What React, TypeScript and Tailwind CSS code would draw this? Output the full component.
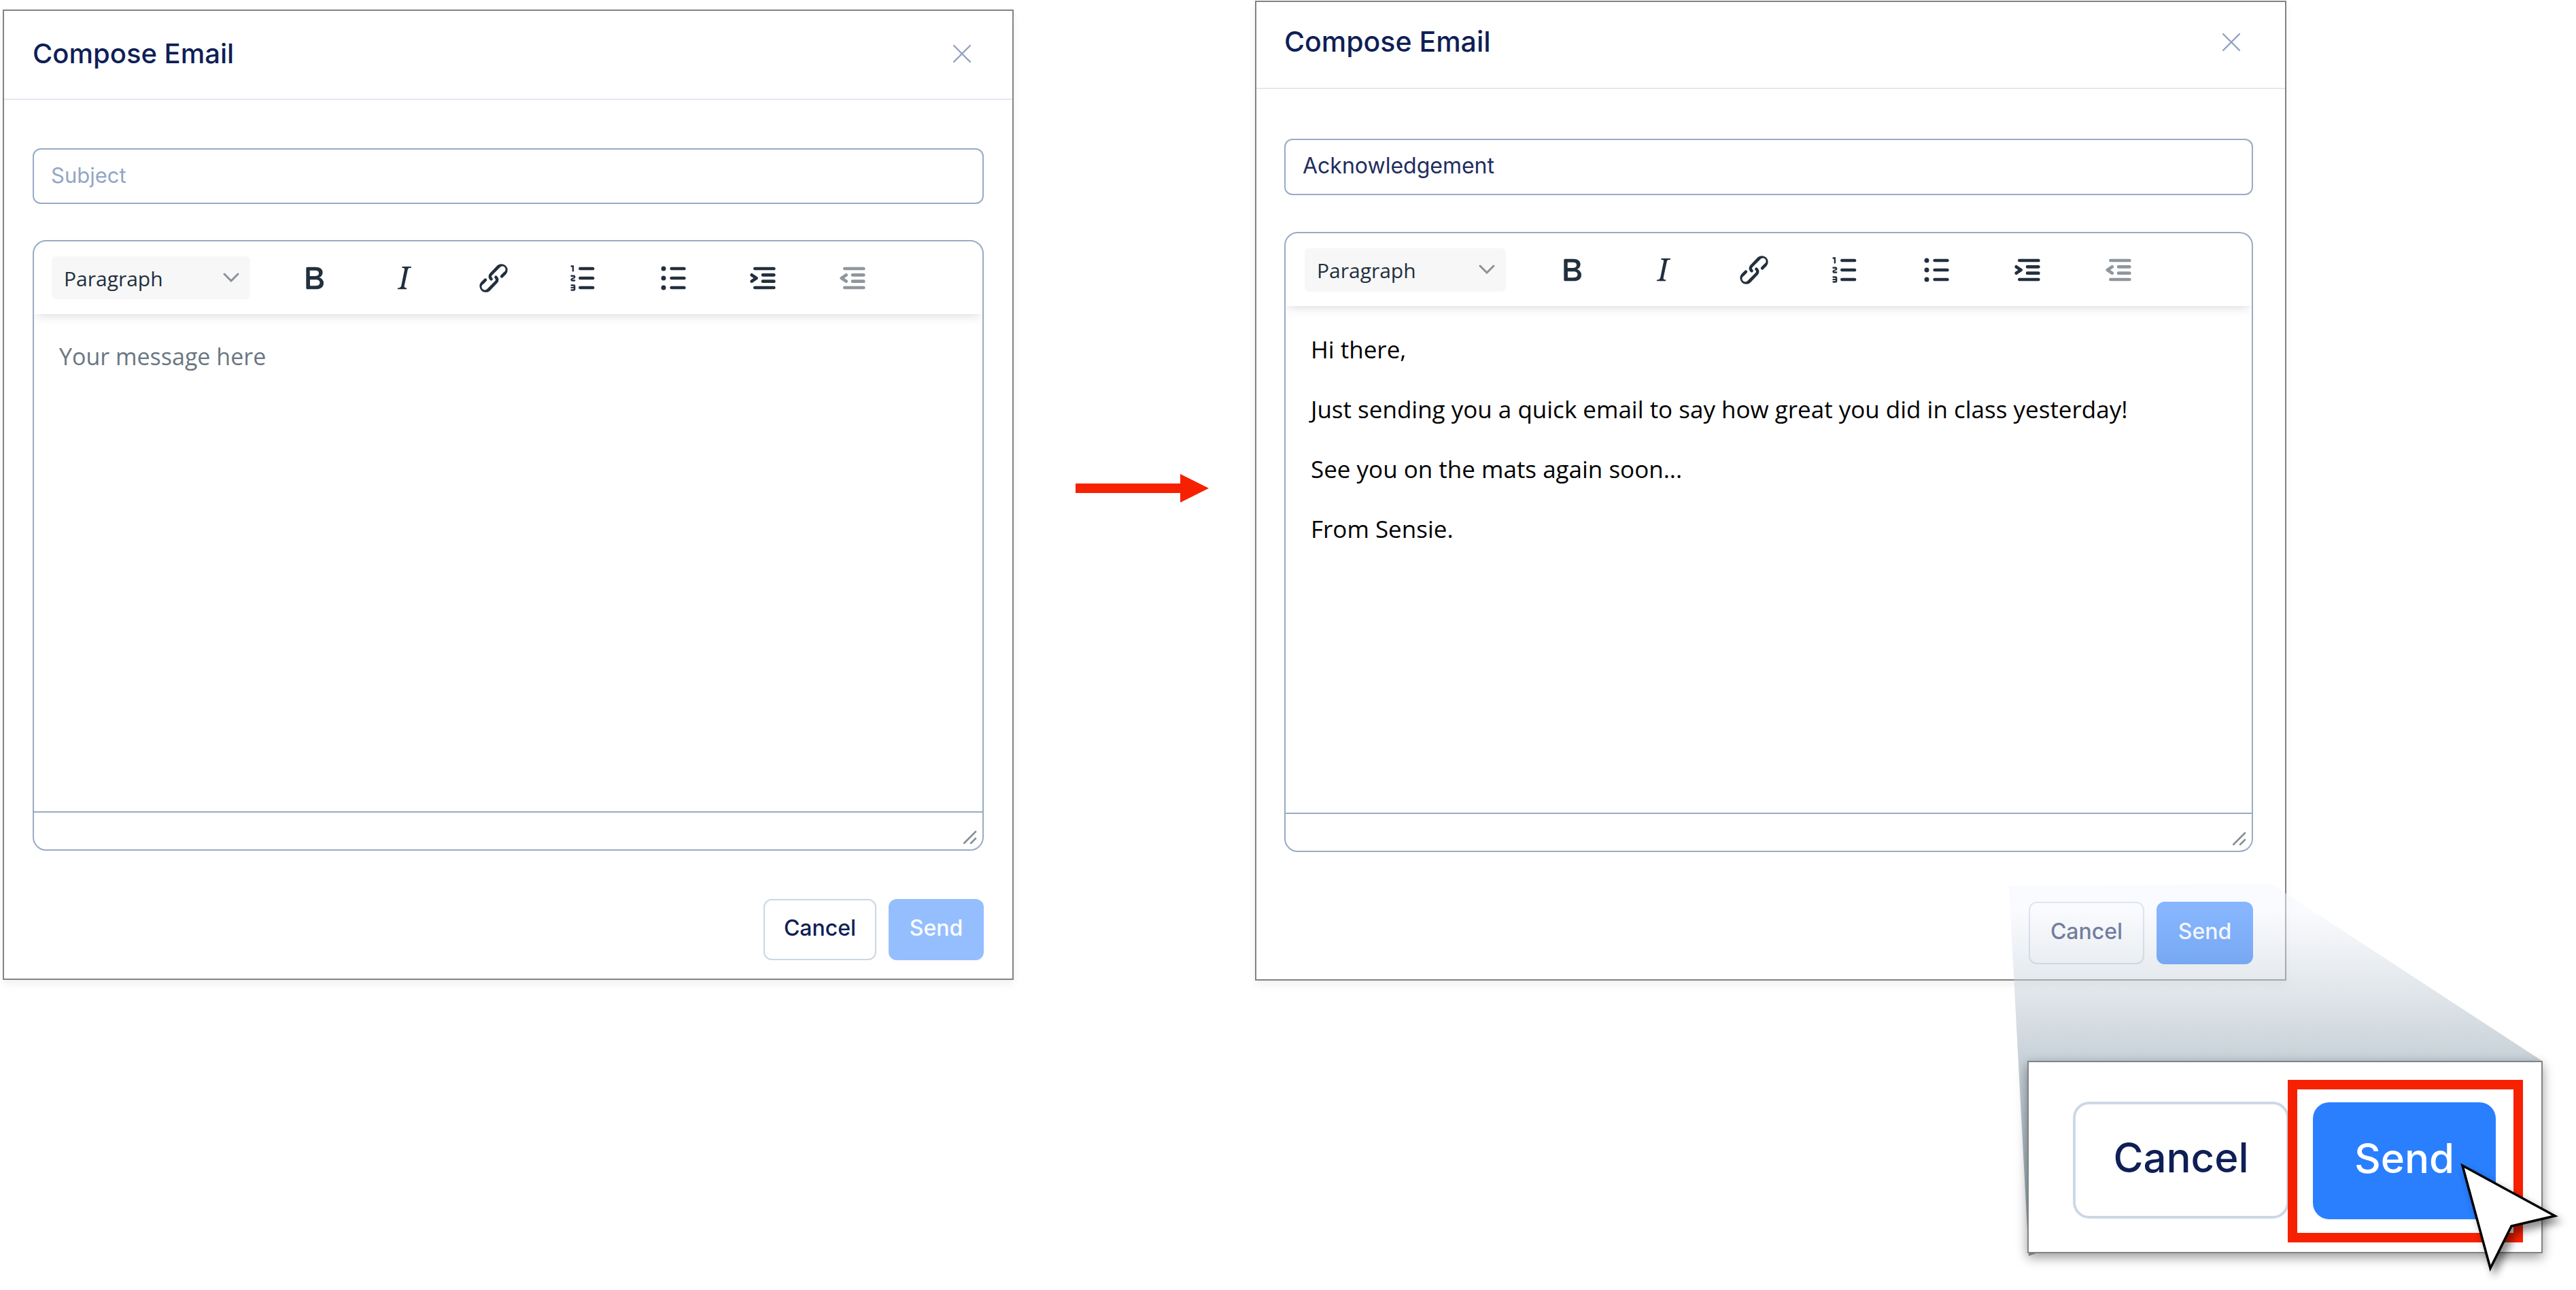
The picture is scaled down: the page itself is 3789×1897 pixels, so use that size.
import React, { useId, useState } from 'react';

const TOOLBAR_ICONS = {
    bold: 'M7.8 19c-.3 0-.5 0-.6-.2l-.2-.5V5.7c0-.2 0-.4.2-.5l.6-.2h5c1.5 0 2.7.3 3.5 1 .7.6 1.1 1.4 1.1 2.5a3 3 0 0 1-.6 1.9c-.4.6-1 1-1.6 1.2.4.1.9.3 1.3.6s.8.7 1 1.2c.4.4.5 1 .5 1.6 0 1.3-.4 2.3-1.3 3-.8.7-2.1 1-3.8 1H7.8Zm5-8.3c.6 0 1.2-.1 1.6-.5.4-.3.6-.7.6-1.3 0-1.1-.8-1.7-2.3-1.7H9.3v3.5h3.4Zm.5 6c.7 0 1.3-.1 1.7-.4.4-.4.6-.9.6-1.5s-.2-1-.7-1.4c-.4-.3-1-.4-2-.4H9.4v3.8h4Z',
    italic: 'm16.7 4.7-.1.9h-.3c-.6 0-1 0-1.4.3-.3.3-.4.6-.5 1.1l-2.1 9.8v.6c0 .5.4.8 1.4.8h.2l-.2.8H8l.2-.8h.2c1.1 0 1.8-.5 2-1.5l2-9.8.1-.5c0-.6-.4-.8-1.4-.8h-.3l.2-.9h5.8Z',
    link: 'M6.2 12.3a1 1 0 0 1 1.4 1.4l-2 2a2 2 0 1 0 2.6 2.8l4.8-4.8a1 1 0 0 0 0-1.4 1 1 0 1 1 1.4-1.3 2.9 2.9 0 0 1 0 4L9.6 20a3.9 3.9 0 0 1-5.5-5.5l2-2Zm11.6-.6a1 1 0 0 1-1.4-1.4l2-2a2 2 0 1 0-2.6-2.8L11 10.3a1 1 0 0 0 0 1.4A1 1 0 1 1 9.6 13a2.9 2.9 0 0 1 0-4L14.4 4a3.9 3.9 0 0 1 5.5 5.5l-2 2Z',
    numbered: 'M10 17h8c.6 0 1 .4 1 1s-.4 1-1 1h-8a1 1 0 0 1 0-2Zm0-6h8c.6 0 1 .4 1 1s-.4 1-1 1h-8a1 1 0 0 1 0-2Zm0-6h8c.6 0 1 .4 1 1s-.4 1-1 1h-8a1 1 0 1 1 0-2ZM6 4v3.5c0 .3-.2.5-.5.5a.5.5 0 0 1-.5-.5V5h-.5a.5.5 0 0 1 0-1H6Zm-1 8.8.2.2h1.3c.3 0 .5.2.5.5s-.2.5-.5.5H4.9a1 1 0 0 1-.9-1V13c0-.4.3-.8.6-1l1.2-.4.2-.3a.2.2 0 0 0-.2-.2H4.5a.5.5 0 0 1-.5-.5c0-.3.2-.5.5-.5h1.6c.5 0 .9.4.9 1v.1c0 .4-.3.8-.6 1l-1.2.4-.2.3ZM7 17v2c0 .6-.4 1-1 1H4.5a.5.5 0 0 1 0-1h1.2c.2 0 .3-.1.3-.3 0-.2-.1-.3-.3-.3H4.4a.4.4 0 1 1 0-.8h1.3c.2 0 .3-.1.3-.3 0-.2-.1-.3-.3-.3H4.5a.5.5 0 1 1 0-1H6c.6 0 1 .4 1 1Z',
    bullets: 'M11 5h8c.6 0 1 .4 1 1s-.4 1-1 1h-8a1 1 0 0 1 0-2Zm0 6h8c.6 0 1 .4 1 1s-.4 1-1 1h-8a1 1 0 0 1 0-2Zm0 6h8c.6 0 1 .4 1 1s-.4 1-1 1h-8a1 1 0 0 1 0-2ZM4.5 6a1.5 1.5 0 1 1 3 0 1.5 1.5 0 0 1-3 0Zm0 6a1.5 1.5 0 1 1 3 0 1.5 1.5 0 0 1-3 0Zm0 6a1.5 1.5 0 1 1 3 0 1.5 1.5 0 0 1-3 0Z',
    indent: 'M7 5h12c.6 0 1 .4 1 1s-.4 1-1 1H7a1 1 0 1 1 0-2Zm5 4h7c.6 0 1 .4 1 1s-.4 1-1 1h-7a1 1 0 0 1 0-2Zm0 4h7c.6 0 1 .4 1 1s-.4 1-1 1h-7a1 1 0 0 1 0-2Zm-5 4h12a1 1 0 0 1 0 2H7a1 1 0 0 1 0-2Zm-2.6-3.8L6.2 12l-1.8-1.2a1 1 0 0 1 1.2-1.6l3 2a1 1 0 0 1 0 1.6l-3 2a1 1 0 1 1-1.2-1.6Z',
    outdent: 'M7 5h12c.6 0 1 .4 1 1s-.4 1-1 1H7a1 1 0 1 1 0-2Zm5 4h7c.6 0 1 .4 1 1s-.4 1-1 1h-7a1 1 0 0 1 0-2Zm0 4h7c.6 0 1 .4 1 1s-.4 1-1 1h-7a1 1 0 0 1 0-2Zm-5 4h12a1 1 0 0 1 0 2H7a1 1 0 0 1 0-2Zm1.6-3.8a1 1 0 0 1-1.2 1.6l-3-2a1 1 0 0 1 0-1.6l3-2a1 1 0 0 1 1.2 1.6L6.8 12l1.8 1.2Z',
};

const TOOLBAR_BUTTONS = [
    { label: 'Bold', path: TOOLBAR_ICONS.bold },
    { label: 'Italic', path: TOOLBAR_ICONS.italic },
    { label: 'Insert link', path: TOOLBAR_ICONS.link },
    { label: 'Numbered list', path: TOOLBAR_ICONS.numbered },
    { label: 'Bullet list', path: TOOLBAR_ICONS.bullets },
    { label: 'Increase indent', path: TOOLBAR_ICONS.indent },
    { label: 'Decrease indent', path: TOOLBAR_ICONS.outdent, disabled: true },
];

const SAMPLE_MESSAGE = [
    'Hi there,',
    'Just sending you a quick email to say how great you did in class yesterday!',
    'See you on the mats again soon...',
    'From Sensie.',
].join('\n\n');

// The empty dialog is shown slightly smaller than the filled one
const SIZES = {
    empty: {
        header: 'h-[131px] pl-[42px] pr-[42px] pb-1',
        title: 'text-[40px]',
        body: 'px-[42px] pt-[71px]',
        subject: 'h-[82px] text-[31px]',
        editor: 'mt-[53px]',
        toolbar: 'h-[107px] pl-[26px] gap-7',
        select: 'w-[292px] h-[63px]',
        tool: 'w-[132px]',
        message: 'h-[731px] px-[37px] pt-10 text-[34px]',
        status: 'h-[56px]',
        footer: 'mt-[71px] pb-[27px] gap-[18px]',
        cancel: 'w-[166px] h-[90px] pb-1',
        send: 'w-[140px] h-[90px] pb-1 bg-[#95beff]',
    },
    filled: {
        header: 'h-[128px] pl-[41px] pr-[47px] pb-2',
        title: 'text-[41px]',
        body: 'pl-[41px] pr-[47px] pt-[73px]',
        subject: 'h-[83px] text-[32px]',
        editor: 'mt-[54px]',
        toolbar: 'h-[107px] pl-7 gap-[30px]',
        select: 'w-[296px] h-[64px]',
        tool: 'w-[134px]',
        message: 'h-[745px] px-[37px] pt-[42px] text-[35px]',
        status: 'h-[56px]',
        footer: 'mt-[73px] pb-[22px] gap-[18px]',
        cancel: 'w-[170px] h-[92px] pb-1',
        send: 'w-[142px] h-[92px] pb-1 bg-[#2a7fff]',
    },
};

interface ComposeDialogProps {
    size: keyof typeof SIZES;
    initialSubject?: string;
    initialMessage?: string;
}

const ComposeDialog: React.FC<ComposeDialogProps> = ({ size, initialSubject = '', initialMessage = '' }) => {
    const id = useId();
    const [subject, setSubject] = useState(initialSubject);
    const [message, setMessage] = useState(initialMessage);
    const s = SIZES[size];

    return (
        <section aria-labelledby={`${id}-title`} className="bg-white border-2 border-[#838383] shadow-[0_6px_12px_rgba(0,0,0,0.06)]">
            <header className={`flex items-center justify-between border-b-2 border-[#e2e8f0] ${s.header}`}>
                <h2 id={`${id}-title`} className={`font-medium text-[#0f1f56] ${s.title}`}>Compose Email</h2>
                <button type="button" aria-label="Close" className="w-16 h-16 flex items-center justify-center text-[#8fa3c0]">
                    <svg viewBox="0 0 28 28" className="w-7 h-7" fill="none" stroke="currentColor" strokeWidth="2.4" strokeLinecap="round">
                        <path d="M2 2l24 24M26 2l-24 24" />
                    </svg>
                </button>
            </header>

            <div className={s.body}>
                <input
                    type="text"
                    aria-label="Subject"
                    placeholder="Subject"
                    value={subject}
                    onChange={(e) => setSubject(e.target.value)}
                    className={`block w-full rounded-xl border-2 border-[#9aabc6] px-[25px] pb-1 text-[#1f2d5f] placeholder:text-[#94a6c6] outline-none ${s.subject}`}
                />

                <div className={`rounded-[20px] border-2 border-[#9aabc2] overflow-hidden ${s.editor}`}>
                    <div className={`relative flex items-center shadow-[0_4px_16px_-4px_rgba(34,47,62,0.22)] ${s.toolbar}`}>
                        <div className="relative">
                            <select
                                aria-label="Block format"
                                className={`block appearance-none rounded-md bg-[#f7f7f7] pl-[18px] pt-0.5 font-['Open_Sans',sans-serif] text-[30px] text-[#222f3e] outline-none ${s.select}`}
                            >
                                <option>Paragraph</option>
                            </select>
                            <svg viewBox="0 0 24 14" className="absolute right-4 top-6 w-6 h-3.5 pointer-events-none" fill="none" stroke="#8b9199" strokeWidth="3" strokeLinecap="round">
                                <path d="M2 2l10 10L22 2" />
                            </svg>
                        </div>
                        <div className="flex">
                            {TOOLBAR_BUTTONS.map((button) => (
                                <button
                                    key={button.label}
                                    type="button"
                                    aria-label={button.label}
                                    disabled={button.disabled}
                                    className={`h-16 flex items-center justify-center text-[#222f3e] disabled:opacity-50 ${s.tool}`}
                                >
                                    <svg viewBox="0 0 24 24" className="w-14 h-14" fill="currentColor" fillRule="evenodd">
                                        <path d={button.path} />
                                    </svg>
                                </button>
                            ))}
                        </div>
                    </div>
                    <textarea
                        aria-label="Message"
                        placeholder="Your message here"
                        value={message}
                        onChange={(e) => setMessage(e.target.value)}
                        className={`block w-full resize-none leading-[44px] font-['Open_Sans',sans-serif] text-black placeholder:text-[#6b7682] outline-none ${s.message}`}
                    />
                    <div className={`flex items-end justify-end border-t-2 border-[#9aabc2] pr-2 pb-2 ${s.status}`}>
                        <svg viewBox="0 0 20 20" className="w-5 h-5" fill="none" stroke="#868f97" strokeWidth="2.6" strokeLinecap="round">
                            <path d="M1 19L18 2M11 19l7-7" />
                        </svg>
                    </div>
                </div>

                <div className={`flex justify-end text-[32px] font-medium ${s.footer}`}>
                    <button type="button" className={`rounded-xl border-2 border-[#ccd7e4] text-[#0f1f56] ${s.cancel}`}>
                        Cancel
                    </button>
                    <button type="button" className={`rounded-xl text-white ${s.send}`}>
                        Send
                    </button>
                </div>
            </div>
        </section>
    );
};

const StepArrow = () => (
    <svg viewBox="0 0 196 42" className="w-[196px] h-[42px]" fill="#f62100" aria-hidden="true">
        <path d="M0 14h154V0l42 21-42 21V28H0z" />
    </svg>
);

// Zoomed copy of the footer buttons, joined to the originals by a light beam
const SendCallout = () => (
    <div className="absolute -right-[426px] -bottom-[456px] w-[835px] h-[599px]">
        <svg viewBox="0 0 835 599" className="absolute inset-0 w-full h-full pointer-events-none" aria-hidden="true">
            <defs>
                <linearGradient id="beam" gradientUnits="userSpaceOnUse" x1="0" y1="0" x2="0" y2="548">
                    <stop offset="0" stopColor="#f4f6ff" stopOpacity="0.46" />
                    <stop offset="0.07" stopColor="#f4f6ff" stopOpacity="0.46" />
                    <stop offset="0.23" stopColor="#cdd6de" stopOpacity="0.46" />
                    <stop offset="0.48" stopColor="#8fa3b0" stopOpacity="0.5" />
                    <stop offset="1" stopColor="#5f7c90" stopOpacity="0.75" />
                </linearGradient>
            </defs>
            <path d="M1 4L387 1 785 261 30 548z" fill="url(#beam)" />
        </svg>

        <div className="relative ml-[28px] mt-[261px] w-[758px] h-[283px] flex items-start bg-white border-2 border-[#838383] pt-[26px] pl-[65px] text-[60px] font-medium shadow-[0_6px_16px_rgba(0,0,0,0.4)]">
            <button type="button" className="mt-8 w-[318px] h-[172px] pb-2 rounded-3xl border-4 border-[#ccd8e5] text-[#0f1f56]">
                Cancel
            </button>
            <div className="relative -ml-0.5 border-[14px] border-[#f62100] pt-[19px] pb-5 pl-[23px] pr-[26px]">
                <button type="button" className="block w-[269px] h-[172px] pb-2 rounded-3xl bg-[#2a7fff] text-white">
                    Send
                </button>
            </div>
        </div>

        <svg viewBox="0 0 156 172" className="absolute right-[16px] bottom-[17px] w-[156px] h-[172px] pointer-events-none drop-shadow-[6px_8px_6px_rgba(0,0,0,0.45)]" aria-hidden="true">
            <path d="M5 5L141 79 77 94 46 156z" fill="#fff" stroke="#000" strokeWidth="3.5" />
        </svg>
    </div>
);

export default function App() {
    return (
        <main className="min-h-screen overflow-hidden bg-white pl-1 grid grid-cols-[1487fr_355fr_1517fr_426fr] items-start font-['Inter',sans-serif]">
            <div className="pt-3.5">
                <ComposeDialog size="empty" />
            </div>
            <div className="pt-[697px] pl-[91px]">
                <StepArrow />
            </div>
            <div className="relative pt-px">
                <ComposeDialog size="filled" initialSubject="Acknowledgement" initialMessage={SAMPLE_MESSAGE} />
                <SendCallout />
            </div>
        </main>
    );
}
